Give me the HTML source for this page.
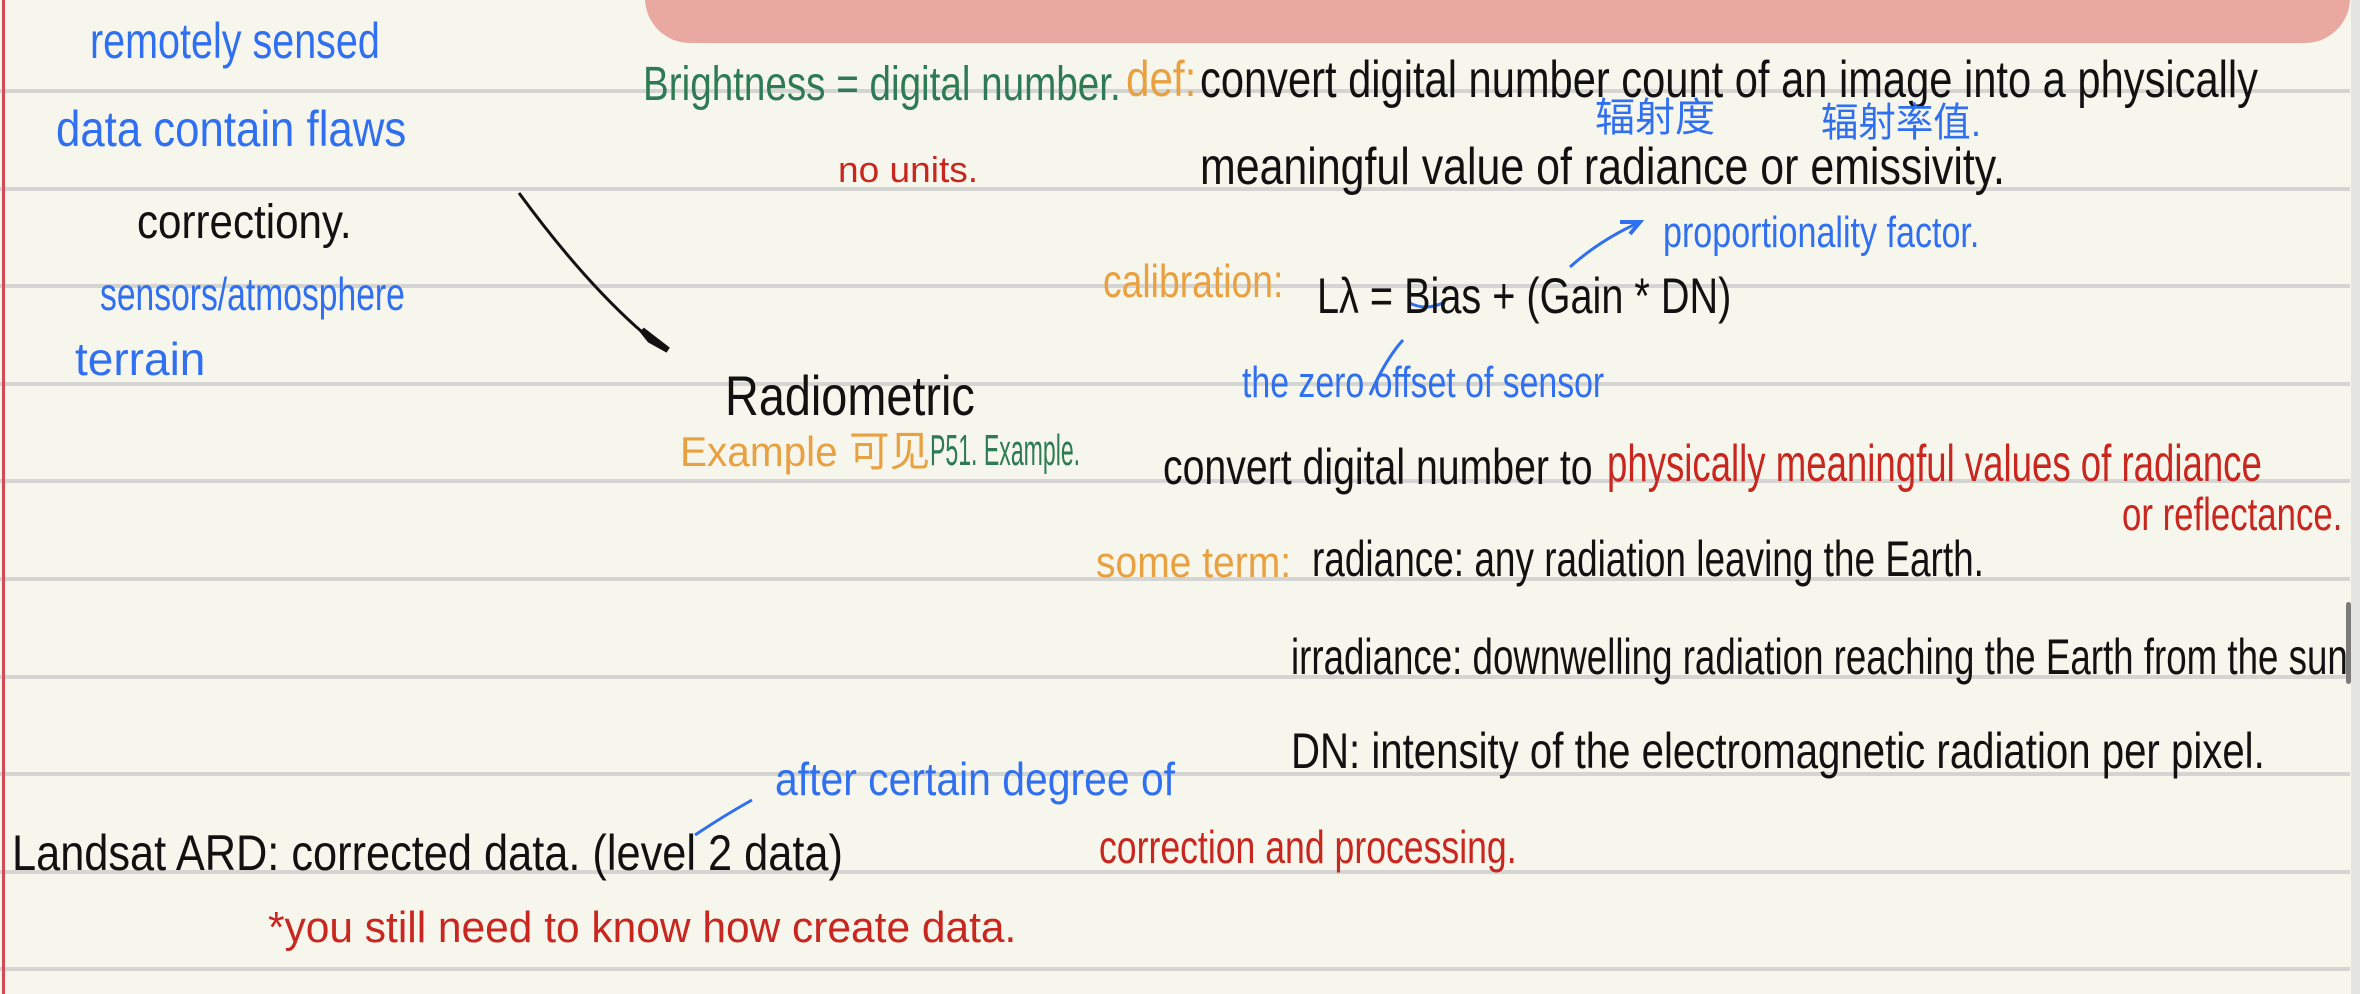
<!DOCTYPE html>
<html><head><meta charset="utf-8"><style>
html,body{margin:0;padding:0}
body{width:2360px;height:994px;position:relative;overflow:hidden;background:#f6f6ec;font-family:"Liberation Sans","Noto Sans CJK SC",sans-serif}
.ln{position:absolute;left:0;width:2350px;height:4px;background:#d4d4d2}
.t{position:absolute;white-space:nowrap;line-height:1;transform-origin:0 0;font-weight:normal}
.b{color:#2f6ff0}.k{color:#111}.g{color:#2e7a55}.o{color:#e8a040}.r{color:#c8261e}
</style></head><body>
<div class="ln" style="top:89px"></div><div class="ln" style="top:187px"></div><div class="ln" style="top:284px"></div><div class="ln" style="top:382px"></div><div class="ln" style="top:479px"></div><div class="ln" style="top:577px"></div><div class="ln" style="top:675px"></div><div class="ln" style="top:772px"></div><div class="ln" style="top:870px"></div><div class="ln" style="top:967px"></div>
<div style="position:absolute;left:2px;top:0;width:3px;height:994px;background:#d24a55"></div>
<div style="position:absolute;left:2351px;top:0;width:9px;height:994px;background:#e4e4e2"></div>
<div style="position:absolute;left:2346px;top:602px;width:5px;height:82px;background:#7b7b78;border-radius:3px"></div>
<div style="position:absolute;left:645px;top:-60px;width:1705px;height:103px;background:#e9a9a0;border-radius:0 0 45px 45px"></div>
<svg style="position:absolute;left:0;top:0" width="2360" height="994">
<path d="M519 193 Q590 290 655 343" stroke="#111" stroke-width="3" fill="none"/>
<path d="M642 330 L668 350 L650 340Z" stroke="#111" stroke-width="6" fill="#111"/>
<path d="M1570 267 Q1600 240 1640 222" stroke="#2f6ff0" stroke-width="3" fill="none"/>
<path d="M1620 222 L1640 222 L1630 234" stroke="#2f6ff0" stroke-width="4" fill="none"/>
<path d="M1408 302 Q1425 312 1445 302" stroke="#2f6ff0" stroke-width="3" fill="none"/>
<path d="M1403 340 Q1385 360 1370 395" stroke="#2f6ff0" stroke-width="3" fill="none"/>
<path d="M695 835 Q725 815 752 800" stroke="#2f6ff0" stroke-width="3" fill="none"/>
</svg>
<div class="t b fit" style="left:90px;top:16px;font-size:50px;width:290px">remotely sensed</div>
<div class="t b fit" style="left:56px;top:104px;font-size:50px;width:350px">data contain flaws</div>
<div class="t k fit" style="left:137px;top:199px;font-size:48px;width:215px">correctiony.</div>
<div class="t b fit" style="left:100px;top:271px;font-size:46px;width:305px">sensors/atmosphere</div>
<div class="t b fit" style="left:75px;top:336px;font-size:46px;width:130px">terrain</div>
<div class="t g fit" style="left:643px;top:61px;font-size:48px;width:478px">Brightness = digital number.</div>
<div class="t o fit" style="left:1126px;top:54px;font-size:50px;width:70px">def:</div>
<div class="t k fit" style="left:1200px;top:54px;font-size:52px;width:1058px">convert digital number count of an image into a physically</div>
<div class="t r fit" style="left:838px;top:152px;font-size:36px;width:140px">no units.</div>
<div class="t b fit" style="left:1595px;top:98px;font-size:40px;width:120px">辐射度</div>
<div class="t b fit" style="left:1821px;top:103px;font-size:40px;width:160px">辐射率值.</div>
<div class="t k fit" style="left:1200px;top:141px;font-size:52px;width:805px">meaningful value of radiance or emissivity.</div>
<div class="t b fit" style="left:1663px;top:211px;font-size:44px;width:316px">proportionality factor.</div>
<div class="t o fit" style="left:1103px;top:258px;font-size:46px;width:180px">calibration:</div>
<div class="t k fit" style="left:1317px;top:271px;font-size:50px;width:414px">Lλ = Bias + (Gain * DN)</div>
<div class="t b fit" style="left:1242px;top:361px;font-size:44px;width:362px">the zero offset of sensor</div>
<div class="t k fit" style="left:725px;top:368px;font-size:56px;width:250px">Radiometric</div>
<div class="t o fit" style="left:680px;top:431px;font-size:42px;width:250px">Example 可见</div>
<div class="t g fit" style="left:930px;top:429px;font-size:44px;width:150px">P51. Example.</div>
<div class="t k fit" style="left:1163px;top:442px;font-size:50px;width:430px">convert digital number to</div>
<div class="t r fit" style="left:1607px;top:438px;font-size:52px;width:655px">physically meaningful values of radiance</div>
<div class="t r fit" style="left:2122px;top:491px;font-size:46px;width:220px">or reflectance.</div>
<div class="t o fit" style="left:1096px;top:541px;font-size:44px;width:195px">some term:</div>
<div class="t k fit" style="left:1312px;top:534px;font-size:50px;width:672px">radiance: any radiation leaving the Earth.</div>
<div class="t k fit" style="left:1291px;top:632px;font-size:50px;width:1057px">irradiance: downwelling radiation reaching the Earth from the sun</div>
<div class="t k fit" style="left:1291px;top:726px;font-size:50px;width:974px">DN: intensity of the electromagnetic radiation per pixel.</div>
<div class="t b fit" style="left:775px;top:756px;font-size:46px;width:400px">after certain degree of</div>
<div class="t r fit" style="left:1099px;top:824px;font-size:46px;width:418px">correction and processing.</div>
<div class="t k fit" style="left:12px;top:828px;font-size:50px;width:831px">Landsat ARD: corrected data. (level 2 data)</div>
<div class="t r fit" style="left:268px;top:906px;font-size:44px;width:748px">*you still need to know how create data.</div>
<script>
document.querySelectorAll('.fit').forEach(function(e){var w=parseFloat(e.style.width);e.style.width='auto';var s=w/e.scrollWidth;e.style.transform='scaleX('+s+')';});
</script>
</body></html>
